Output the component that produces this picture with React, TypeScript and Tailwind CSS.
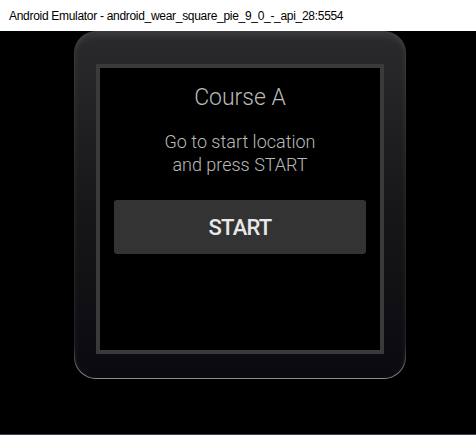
import React from 'react';

const WatchScreen: React.FC = () => (
  <div className="flex h-full w-full flex-col items-center bg-black px-[14px] pt-4 font-['Roboto',sans-serif]">
    <div className="text-[23px] font-light leading-[28px] text-[#bababa]">Course A</div>
    <div className="mt-[18px] text-center text-[18px] font-light leading-[23px] text-[#bababa]">
      Go to start location
      <br />
      and press START
    </div>
    <button className="mt-6 flex h-[54px] w-full items-center justify-center rounded-[3px] bg-[#333333] text-[22px] font-medium tracking-[-0.8px] text-[#e8e8e8]">
      START
    </button>
  </div>
);

export default function App() {
  return (
    <div className="flex h-[435px] w-[476px] flex-col overflow-hidden bg-black">
      {/* window title bar */}
      <div className="flex h-[31px] shrink-0 items-center bg-white pl-[9px] font-['Liberation_Sans',sans-serif] text-[12px] tracking-[-0.3px] text-black">
        Android Emulator - android_wear_square_pie_9_0_-_api_28:5554
      </div>

      <div className="flex-1">
        {/* watch body, 1px rim lit at the bottom edge */}
        <div className="ml-[74px] h-[348px] w-[332px] rounded-[22px] bg-[linear-gradient(to_bottom,#3c3c3f_0%,#222225_50%,#1e1e21_90%,#8e8e8e_100%)] p-px">
          <div className="h-full w-full rounded-[21px] bg-gradient-to-b from-[#2b2b2e] via-[#17171a] to-[#0b0b0f] pt-[32px] shadow-[inset_0_10px_6px_-6px_rgba(255,255,255,0.08),inset_4px_0_4px_-2px_rgba(255,255,255,0.04),inset_-4px_0_4px_-2px_rgba(255,255,255,0.04)]">
            <div className="mx-auto h-[290px] w-[288px] border-[4px] border-[#3a3a3c]">
              <WatchScreen />
            </div>
          </div>
        </div>
      </div>

      <div className="h-px shrink-0 bg-[#34434f]" />
    </div>
  );
}
